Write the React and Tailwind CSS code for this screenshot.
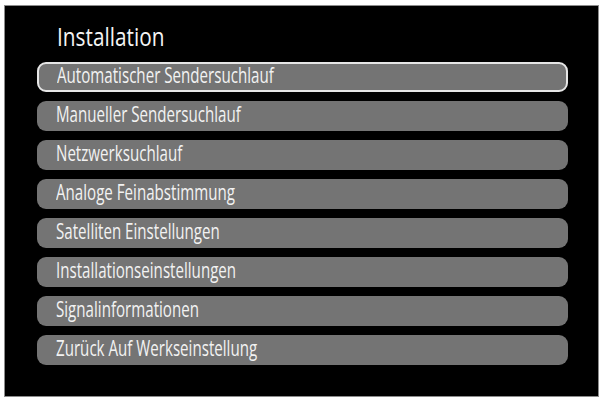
const items = [
  'Automatischer Sendersuchlauf',
  'Manueller Sendersuchlauf',
  'Netzwerksuchlauf',
  'Analoge Feinabstimmung',
  'Satelliten Einstellungen',
  'Installationseinstellungen',
  'Signalinformationen',
  'Zurück Auf Werkseinstellung',
];

const font = { fontFamily: '"Open Sans", "Liberation Sans", sans-serif' };

export default function App() {
  return (
    <div className="w-[603px] h-[398px] bg-white pt-[5px] pl-[4px]" style={font}>
      <div className="w-[595px] h-[392px] bg-black border border-[#8c8c8c] pt-[15px] pl-[32px] pr-[30px]">
        <div className="h-[30px] leading-[30px] text-[26px] font-medium text-[#f4f4f4] pl-[20px] mb-[11px] whitespace-nowrap">
          <span className="inline-block origin-left scale-x-[0.8]">Installation</span>
        </div>
        <div className="flex flex-col gap-[9px]">
          {items.map((label, i) => (
            <div
              key={label}
              className={`h-[30px] flex items-center rounded-[9px] bg-[#747474] pb-[4px] text-[21px] font-medium leading-none text-[#f2f2f2] whitespace-nowrap ${
                i === 0 ? 'border-2 border-[#e6e6e6] pl-[18px]' : 'pl-[19px]'
              }`}
            >
              <span className="inline-block origin-left scale-x-[0.72]">{label}</span>
            </div>
          ))}
        </div>
      </div>
    </div>
  );
}
